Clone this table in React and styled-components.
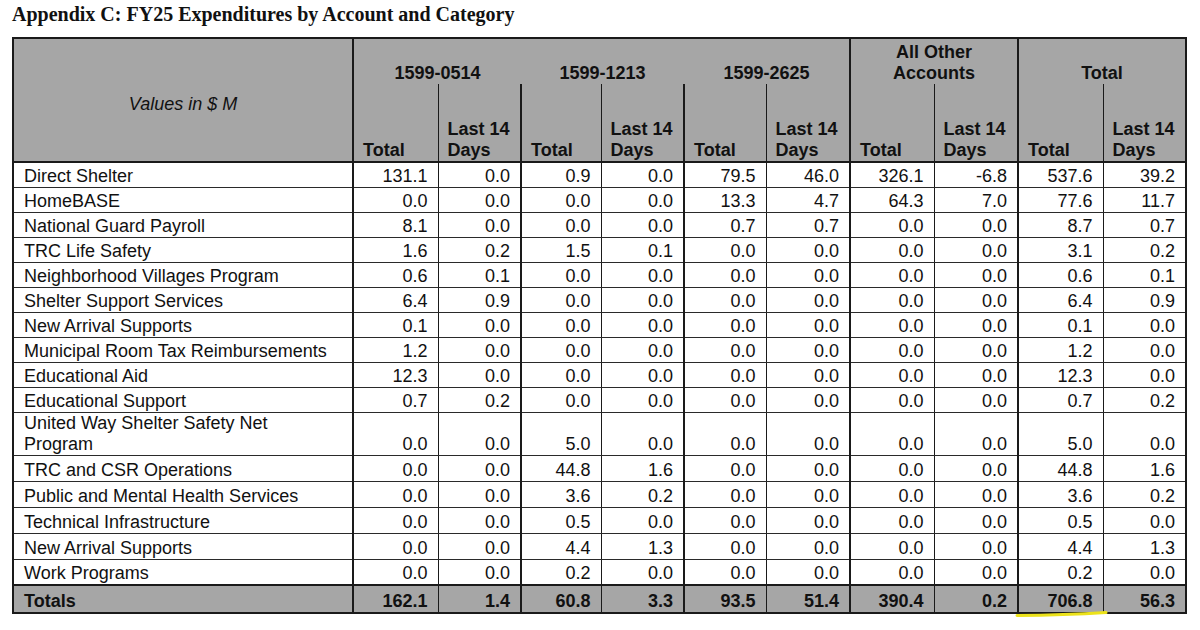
import React from 'react';
import styled, { createGlobalStyle } from 'styled-components';

const GlobalStyle = createGlobalStyle`
  html, body {
    margin: 0;
    padding: 0;
    background: #ffffff;
  }
  body {
    font-family: 'Liberation Sans', Arial, sans-serif;
    color: #111111;
  }
`;

const groups = [
  { title: '1599-0514', split: 'open-right' },
  { title: '1599-1213', split: 'open-both' },
  { title: '1599-2625', split: 'open-left' },
  { title: ['All Other', 'Accounts'], split: 'closed' },
  { title: 'Total', split: 'closed' },
];

const colWidths = [340, 85, 83, 80, 83, 82, 84, 84, 84, 85, 83];

const rows = [
  ['Direct Shelter', '131.1', '0.0', '0.9', '0.0', '79.5', '46.0', '326.1', '-6.8', '537.6', '39.2'],
  ['HomeBASE', '0.0', '0.0', '0.0', '0.0', '13.3', '4.7', '64.3', '7.0', '77.6', '11.7'],
  ['National Guard Payroll', '8.1', '0.0', '0.0', '0.0', '0.7', '0.7', '0.0', '0.0', '8.7', '0.7'],
  ['TRC Life Safety', '1.6', '0.2', '1.5', '0.1', '0.0', '0.0', '0.0', '0.0', '3.1', '0.2'],
  ['Neighborhood Villages Program', '0.6', '0.1', '0.0', '0.0', '0.0', '0.0', '0.0', '0.0', '0.6', '0.1'],
  ['Shelter Support Services', '6.4', '0.9', '0.0', '0.0', '0.0', '0.0', '0.0', '0.0', '6.4', '0.9'],
  ['New Arrival Supports', '0.1', '0.0', '0.0', '0.0', '0.0', '0.0', '0.0', '0.0', '0.1', '0.0'],
  ['Municipal Room Tax Reimbursements', '1.2', '0.0', '0.0', '0.0', '0.0', '0.0', '0.0', '0.0', '1.2', '0.0'],
  ['Educational Aid', '12.3', '0.0', '0.0', '0.0', '0.0', '0.0', '0.0', '0.0', '12.3', '0.0'],
  ['Educational Support', '0.7', '0.2', '0.0', '0.0', '0.0', '0.0', '0.0', '0.0', '0.7', '0.2'],
  [['United Way Shelter Safety Net', 'Program'], '0.0', '0.0', '5.0', '0.0', '0.0', '0.0', '0.0', '0.0', '5.0', '0.0'],
  ['TRC and CSR Operations', '0.0', '0.0', '44.8', '1.6', '0.0', '0.0', '0.0', '0.0', '44.8', '1.6'],
  ['Public and Mental Health Services', '0.0', '0.0', '3.6', '0.2', '0.0', '0.0', '0.0', '0.0', '3.6', '0.2'],
  ['Technical Infrastructure', '0.0', '0.0', '0.5', '0.0', '0.0', '0.0', '0.0', '0.0', '0.5', '0.0'],
  ['New Arrival Supports', '0.0', '0.0', '4.4', '1.3', '0.0', '0.0', '0.0', '0.0', '4.4', '1.3'],
  ['Work Programs', '0.0', '0.0', '0.2', '0.0', '0.0', '0.0', '0.0', '0.0', '0.2', '0.0'],
];

const totals = ['162.1', '1.4', '60.8', '3.3', '93.5', '51.4', '390.4', '0.2', '706.8', '56.3'];

// rows below the two-line entry sit a little looser in the source document
const rowHeight = (row, r) => {
  if (Array.isArray(row[0])) return 42;
  return r > 10 ? 26 : 25;
};

const lines = (text) =>
  Array.isArray(text)
    ? text.map((t, i) => (
        <React.Fragment key={i}>
          {i > 0 && <br />}
          {t}
        </React.Fragment>
      ))
    : text;

const App = () => {
  return (
    <>
      <GlobalStyle />
      <Page>
        <Title>Appendix C: FY25 Expenditures by Account and Category</Title>
        <Table>
          <colgroup>
            {colWidths.map((w, i) => (
              <col key={i} style={{ width: w }} />
            ))}
          </colgroup>
          <thead>
            <tr>
              <CornerCell rowSpan={2}>Values in $ M</CornerCell>
              {groups.map((g, i) => (
                <GroupCell key={i} colSpan={2} $split={g.split}>
                  {lines(g.title)}
                </GroupCell>
              ))}
            </tr>
            <tr>
              {groups.map((g, i) => (
                <React.Fragment key={i}>
                  <SubCell $thick>Total</SubCell>
                  <SubCell>
                    Last 14
                    <br />
                    Days
                  </SubCell>
                </React.Fragment>
              ))}
            </tr>
          </thead>
          <tbody>
            {rows.map((row, r) => (
              <BodyRow key={r} $height={rowHeight(row, r)}>
                <LabelCell>{lines(row[0])}</LabelCell>
                {row.slice(1).map((v, i) => (
                  <ValueCell key={i} $thick={i % 2 === 0}>
                    {v}
                  </ValueCell>
                ))}
              </BodyRow>
            ))}
          </tbody>
          <tfoot>
            <TotalsRow>
              <LabelCell>Totals</LabelCell>
              {totals.map((v, i) => (
                <ValueCell key={i} $thick={i % 2 === 0}>
                  {v}
                  {i === 8 && (
                    <Highlight viewBox="0 0 94 10" preserveAspectRatio="none">
                      <path d="M2 6.6 C 30 6.4, 60 5.6, 91 3.6" />
                    </Highlight>
                  )}
                </ValueCell>
              ))}
            </TotalsRow>
          </tfoot>
        </Table>
      </Page>
    </>
  );
};

const Page = styled.div`
  width: 1200px;
  height: 630px;
  padding: 3px 0 0 12px;
  box-sizing: border-box;
  overflow: hidden;
`;

const Title = styled.h1`
  font-family: 'Liberation Serif', 'Times New Roman', serif;
  font-weight: bold;
  font-size: 20px;
  line-height: 23px;
  margin: 0 0 11px 0;
  color: #111111;
`;

const Table = styled.table`
  border-collapse: collapse;
  table-layout: fixed;
  width: 1174px;
  border: 2px solid #1a1a1a;
  font-size: 18px;
  line-height: 21px;

  th,
  td {
    padding: 0;
  }
`;

const CornerCell = styled.th`
  background: #a6a6a6;
  font-style: italic;
  font-weight: normal;
  text-align: center;
  vertical-align: middle;
  border: 2px solid #1a1a1a;
  padding-top: 8px !important;
`;

const GroupCell = styled.th`
  height: 45px;
  background: #a6a6a6;
  font-weight: bold;
  text-align: center;
  vertical-align: bottom;
  border-top: 2px solid #1a1a1a;
  border-left: ${(p) =>
    p.$split === 'open-left' || p.$split === 'open-both' ? 'none' : '2px solid #1a1a1a'};
  border-right: ${(p) =>
    p.$split === 'open-right' || p.$split === 'open-both' ? 'none' : '2px solid #1a1a1a'};
  border-bottom: none;
`;

const SubCell = styled.th`
  height: 77px;
  background: #a6a6a6;
  font-weight: bold;
  text-align: left;
  vertical-align: bottom;
  padding-left: 9px !important;
  border-left: ${(p) => (p.$thick ? '2px' : '1px')} solid #1a1a1a;
  border-bottom: 2px solid #1a1a1a;
`;

const BodyRow = styled.tr`
  height: ${(p) => p.$height}px;

  td {
    border-bottom: 1px solid #2a2a2a;
  }
`;

const TotalsRow = styled.tr`
  height: 28px;
  background: #a6a6a6;
  font-weight: bold;

  td {
    border-top: 2px solid #1a1a1a;
  }
`;

const LabelCell = styled.td`
  text-align: left;
  vertical-align: bottom;
  padding: 0 0 0 10px !important;
  border-right: 2px solid #1a1a1a;
`;

const ValueCell = styled.td`
  position: relative;
  text-align: right;
  vertical-align: bottom;
  padding: 0 10px 0 0 !important;
  border-left: ${(p) => (p.$thick ? '2px' : '1px')} solid #1a1a1a;
`;

const Highlight = styled.svg`
  position: absolute;
  left: -4px;
  bottom: -7px;
  width: 94px;
  height: 10px;
  overflow: visible;

  path {
    fill: none;
    stroke: #ece21a;
    stroke-width: 3;
    stroke-linecap: round;
  }
`;

export default App;
